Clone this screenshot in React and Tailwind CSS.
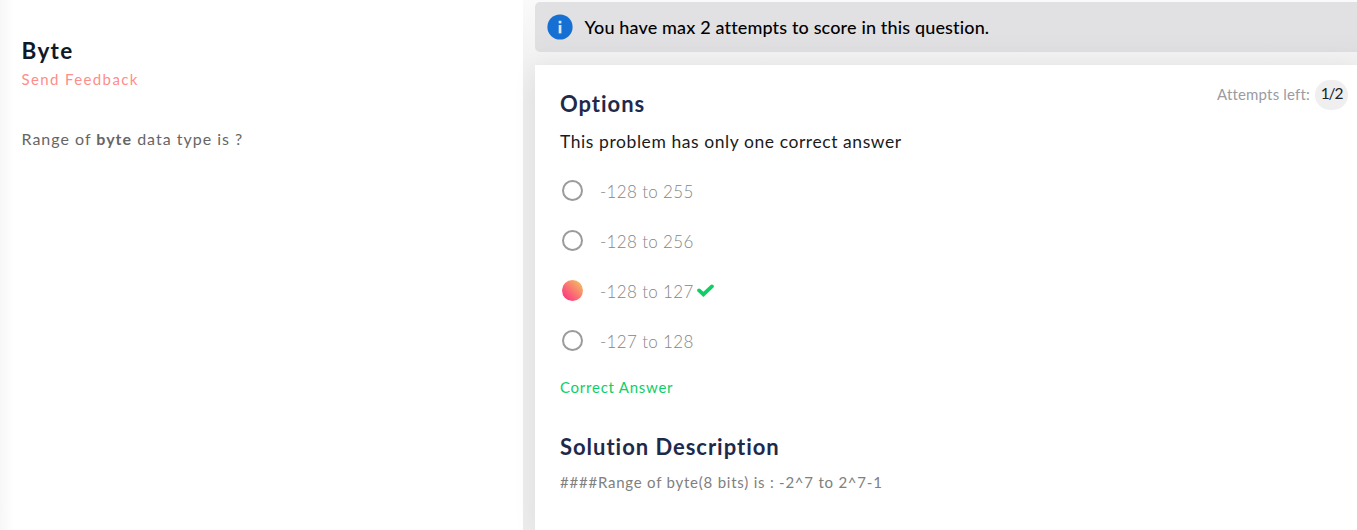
const options = [
  { label: "-128 to 255" },
  { label: "-128 to 256" },
  { label: "-128 to 127", selected: true },
  { label: "-127 to 128" },
];

function InfoIcon() {
  return (
    <svg className="size-[26px] shrink-0" viewBox="0 0 26 26">
      <circle cx="13" cy="13" r="12.6" fill="#1670d3" />
      <rect x="11.7" y="6.8" width="2.7" height="2.6" fill="#d9e6f6" />
      <rect x="11.7" y="11" width="2.7" height="8.4" fill="#d9e6f6" />
    </svg>
  );
}

function CheckIcon() {
  return (
    <svg className="ml-[3px] h-[13px] w-[17px]" viewBox="0 0 17 13">
      <path d="M2.1 6.4 6.4 10.3 14.9 2.4" fill="none" stroke="#0fce66" strokeWidth="3.8" strokeLinecap="round" strokeLinejoin="miter" />
    </svg>
  );
}

function Option({ label, selected }) {
  return (
    <li className="flex h-[50px] items-center">
      <span
        className={
          selected
            ? "ml-0.5 size-[21px] rounded-full bg-linear-to-tr/srgb from-[#ff2385] to-[#f5cb5e]"
            : "ml-0.5 size-[21px] rounded-full border-2 border-[#9b9b9b]"
        }
      />
      <span className="ml-[17px] pt-[3px] text-[17px] leading-6 font-light tracking-[0.33px] text-[#868686]">{label}</span>
      {selected && <CheckIcon />}
    </li>
  );
}

export default function App() {
  return (
    <div className="flex h-[530px] w-full overflow-hidden bg-white font-['Lato',sans-serif]">
      <section className="w-[523px] shrink-0 bg-linear-to-r from-[#f7f7f7] to-white to-[14px] pt-[35px] pl-[21.5px]">
        <h1 className="text-[22.5px] leading-8 font-bold tracking-[1.3px] whitespace-nowrap text-[#0f1928]">Byte</h1>
        <p className="text-[15px] leading-6 tracking-[1.38px] whitespace-nowrap text-[#ff8d89]">Send Feedback</p>
        <p className="mt-9 text-[16px] leading-6 tracking-[1px] whitespace-nowrap text-[#666]">
          Range of <strong className="font-bold">byte</strong> data type is ?
        </p>
      </section>
      <main className="flex min-w-0 grow flex-col bg-[#f8f8f8] bg-linear-to-b from-[#fafafa] to-[#ececec] to-[100px] pt-0.5 pl-3">
        <div className="flex h-[50px] shrink-0 items-center rounded-l-[5px] bg-linear-to-b from-[#e1e1e3] from-60% to-[#dedee0] pl-3">
          <InfoIcon />
          <p className="ml-[11.5px] text-[18px] leading-6 font-medium tracking-[0.15px] whitespace-nowrap text-black">
            You have max 2 attempts to score in this question.
          </p>
        </div>
        <div className="mt-[13px] flex grow justify-between bg-white pr-[9px] pl-[25px] shadow-[0_0_24px_rgba(0,0,0,0.06)]">
          <div className="flex flex-col pt-[23px]">
            <h2 className="text-[22px] leading-8 font-bold tracking-[0.97px] whitespace-nowrap text-[#1f2a4b]">Options</h2>
            <p className="mt-2.5 text-[17.5px] leading-6 tracking-[0.57px] whitespace-nowrap text-[#1b1b1b]">
              This problem has only one correct answer
            </p>
            <ul className="mt-[11px]">
              {options.map((option) => (
                <Option key={option.label} {...option} />
              ))}
            </ul>
            <p className="mt-2.5 text-[15px] leading-6 tracking-[0.75px] whitespace-nowrap text-[#0fce66]">Correct Answer</p>
            <h2 className="mt-8 text-[22px] leading-8 font-bold tracking-[0.97px] whitespace-nowrap text-[#1f2a4b]">
              Solution Description
            </h2>
            <p className="mt-[7px] text-[15px] leading-6 tracking-[0.77px] whitespace-nowrap text-[#808080]">
              ####Range of byte(8 bits) is : -2^7 to 2^7-1
            </p>
          </div>
          <div className="mt-[15px] flex h-[30px] items-center">
            <span className="pb-0.5 text-[15px] tracking-[0.18px] whitespace-nowrap text-[#9b9ba1]">Attempts left:</span>
            <span className="ml-[5px] flex h-[30px] w-[33px] items-center justify-center rounded-full bg-[#efefef] pb-0.5 text-[15.5px] tracking-[-1.1px] text-[#222]">
              1/2
            </span>
          </div>
        </div>
      </main>
    </div>
  );
}
